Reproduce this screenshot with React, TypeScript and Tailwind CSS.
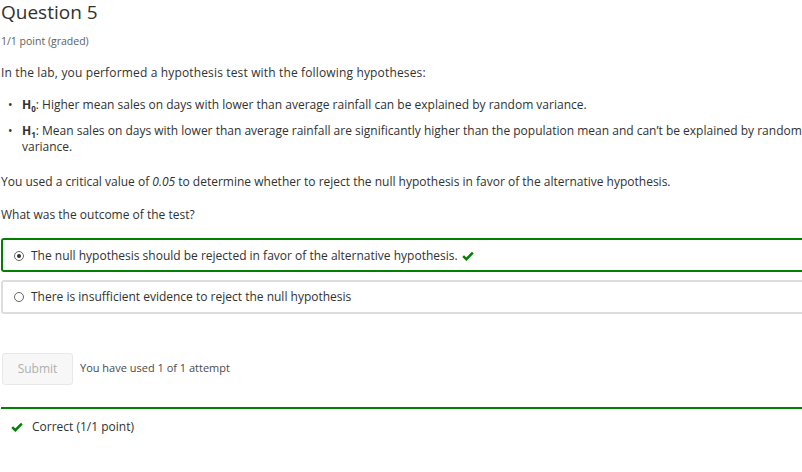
import React from "react";

const Check = ({ className = "" }: { className?: string }) => (
  <svg viewBox="0 0 14 12" className={className} width="12" height="10">
    <path d="M1.2 6.2 L5 9.8 L12.8 2" fill="none" stroke="#008100" strokeWidth="3" strokeLinejoin="miter" />
  </svg>
);

export default function App() {
  return (
    <div
      className="w-[802px] h-[472px] overflow-hidden bg-white text-[#313131]"
      style={{ fontFamily: '"Open Sans", sans-serif' }}
    >
      <div className="w-[805px] pl-[1px]">
        <h2 className="text-[19px] leading-[24px] text-[#313131]">Question 5</h2>
        <div className="text-[10.5px] leading-[14px] mt-[10px] text-[#5e5e5e]">1/1 point (graded)</div>

        <p className="text-[12px] leading-[16px] mt-[17px] tracking-[0.15px]">
          In the lab, you performed a hypothesis test with the following hypotheses:
        </p>
        <ul className="text-[12px] leading-[16px] mt-[16px] pl-[7px]">
          <li className="flex">
            <span className="w-[14px] shrink-0">•</span>
            <span>
              <b>H<span className="text-[8px] leading-none relative top-[3px]">0</span></b>: Higher mean sales on days with lower than average rainfall can be explained by random variance.
            </span>
          </li>
          <li className="flex mt-[10px]">
            <span className="w-[14px] shrink-0">•</span>
            <span>
              <b>H<span className="text-[8px] leading-none relative top-[3px]">1</span></b>: Mean sales on days with lower than average rainfall are significantly higher than the population mean and can’t be explained by random variance.
            </span>
          </li>
        </ul>
        <p className="text-[12px] leading-[16px] mt-[19px]">
          You used a critical value of <i>0.05</i> to determine whether to reject the null hypothesis in favor of the alternative hypothesis.
        </p>
        <p className="text-[12px] leading-[16px] mt-[17px]">What was the outcome of the test?</p>

        <div className="mt-[15px] flex flex-col gap-[8px] text-[12px] leading-[16px]">
          <div className="h-[34px] border-2 border-[#008100] rounded-[3px] flex items-center pl-[11px] pt-[2px]">
            <span className="w-[10px] h-[10px] rounded-full border border-[#666] flex items-center justify-center mr-[7px]">
              <span className="w-[4px] h-[4px] rounded-full bg-[#333]" />
            </span>
            <span>The null hypothesis should be rejected in favor of the alternative hypothesis.</span>
            <Check className="ml-[4px]" />
          </div>
          <div className="h-[34px] border-2 border-[#dddddd] rounded-[3px] flex items-center pl-[11px]">
            <span className="w-[10px] h-[10px] rounded-full border border-[#666] mr-[7px]" />
            <span>There is insufficient evidence to reject the null hypothesis</span>
          </div>
        </div>

        <div className="mt-[39px] flex items-center">
          <div className="ml-[1px] w-[71px] h-[32px] bg-[#f7f7f7] border border-[#e8e8e8] rounded-[3px] flex items-center justify-center text-[12px] text-[#b0b0b0]">
            Submit
          </div>
          <span className="ml-[7px] text-[11px] text-[#4a4a4a] -mt-[2px]">You have used 1 of 1 attempt</span>
        </div>

        <div className="mt-[22px] border-t-2 border-[#008100] flex items-center h-[38px] pl-[10px]">
          <Check className="mr-[9px]" />
          <span className="text-[12px]">Correct (1/1 point)</span>
        </div>
      </div>
    </div>
  );
}
